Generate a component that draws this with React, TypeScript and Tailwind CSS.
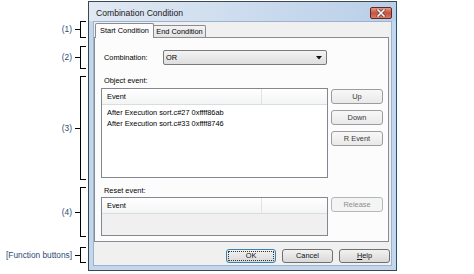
import React from "react";

function Bracket({ label, cls }: { label: string; cls: string }) {
  return (
    <div className={`flex items-center ${cls}`}>
      <span className="flex-1 text-right text-[8.3px] leading-none text-[#2b4a75] pr-[3px] whitespace-nowrap">
        {label}
      </span>
      <div className="w-[5px] h-px bg-black" />
      <div className="w-[6px] self-stretch border-l border-t border-b border-black" />
    </div>
  );
}

function Btn({
  children,
  cls = "",
  variant = "normal",
}: {
  children: React.ReactNode;
  cls?: string;
  variant?: "normal" | "side" | "disabled" | "focus";
}) {
  const v =
    variant === "disabled"
      ? "border-[#b5b8ba] bg-[#f4f4f4] text-[#8d8d8d]"
      : variant === "side"
      ? "border-[#9c9c9c] bg-gradient-to-b from-[#f8f8f8] to-[#e9e9e9] text-[#3a3a3a]"
      : variant === "focus"
      ? "border-[#3c7fb1] bg-gradient-to-b from-[#f2f2f2] to-[#dadada] text-[#111]"
      : "border-[#707070] bg-gradient-to-b from-[#f2f2f2] to-[#d9d9d9] text-[#111]";
  return (
    <div
      className={`relative flex items-center justify-center rounded-[3px] border text-[7.4px] leading-none ${v} ${cls}`}
    >
      {variant === "focus" && (
        <div className="absolute inset-[1px] border border-dotted border-[#333] rounded-[1px]" />
      )}
      <span className="relative">{children}</span>
    </div>
  );
}

function ListBox({
  w,
  h,
  rows,
  body,
}: {
  w: string;
  h: string;
  rows: string[];
  body: string;
}) {
  return (
    <div className={`${w} ${h} border border-[#828790] ${body} flex flex-col`}>
      <div className="h-[16px] flex bg-gradient-to-b from-[#ffffff] to-[#f3f4f5] border-b border-[#dcdcdc]">
        <div className="w-[160px] border-r border-[#e3e3e3] flex items-center pl-[5px] text-[7.4px] leading-none text-black">
          Event
        </div>
        <div className="flex-1" />
      </div>
      <div className="flex flex-col pt-[2px]">
        {rows.map((r) => (
          <div
            key={r}
            className="h-[11px] flex items-center pl-[5px] text-[7.4px] leading-none text-black whitespace-nowrap"
          >
            {r}
          </div>
        ))}
      </div>
    </div>
  );
}

export default function App() {
  return (
    <div className="w-[474px] h-[274px] bg-white flex items-start font-['Liberation_Sans',Arial,sans-serif] overflow-hidden">
      {/* annotation column */}
      <div className="w-[86px] mr-[2px] flex flex-col">
        <Bracket label="(1)" cls="mt-[21px] h-[17px]" />
        <Bracket label="(2)" cls="mt-[8px] h-[23px]" />
        <Bracket label="(3)" cls="mt-[7px] h-[104px]" />
        <Bracket label="(4)" cls="mt-[7px] h-[50px]" />
        <Bracket label="[Function buttons]" cls="mt-[10px] h-[16px]" />
      </div>

      {/* dialog window */}
      <div className="mt-px w-[309px] h-[270px] border border-[#3b4652] border-r-[#1d5876] bg-[#c3d6ec] flex flex-col">
        {/* title bar */}
        <div className="h-[19px] flex items-start bg-gradient-to-r from-[#e1e9f3] via-[#cddcee] to-[#b9cfe8]">
          <span className="pl-[7px] pt-[6px] text-[8.6px] leading-[10px] text-[#1a1a1a] whitespace-nowrap">
            Combination Condition
          </span>
          <div className="ml-auto mr-[4px] mt-[5px] w-[22px] h-[12px] rounded-[2px] border border-[#5b2a22] bg-gradient-to-b from-[#e09a8a] via-[#c8503e] to-[#d77a66] flex items-center justify-center">
            <svg width="10" height="8" viewBox="0 0 10 8">
              <path d="M2 1 L8 7 M8 1 L2 7" stroke="#6a3a34" strokeWidth="3" strokeLinecap="square" />
              <path d="M2 1 L8 7 M8 1 L2 7" stroke="#ffffff" strokeWidth="1.6" strokeLinecap="square" />
            </svg>
          </div>
        </div>

        {/* client area */}
        <div className="mx-[4px] mb-[4px] flex-1 border border-[#9cb3cd] bg-[#f0f0f0] flex flex-col">
          {/* tabs */}
          <div className="h-[16px] flex items-end pl-px -mb-px relative z-10">
            <div className="w-[59px] h-[15px] border-t border-l border-r border-[#898c95] rounded-t-[2px] bg-[#fcfcfc] flex items-center justify-center text-[7.4px] leading-none text-black pb-[1px]">
              Start Condition
            </div>
            <div className="w-[52px] h-[12px] mb-px border-t border-r border-[#898c95] rounded-tr-[2px] bg-gradient-to-b from-[#f3f3f3] to-[#e4e4e4] flex items-center justify-center text-[7.4px] leading-none text-black">
              End Condition
            </div>
          </div>

          {/* tab panel */}
          <div className="mr-[2px] h-[205px] border border-[#898c95] bg-[#fcfcfc] flex flex-col pl-[6px]">
            {/* combination row */}
            <div className="mt-[12px] h-[15px] flex items-center pl-[3px]">
              <span className="w-[59px] text-[7.4px] leading-none text-black">Combination:</span>
              <div className="w-[164px] h-[15px] rounded-[2px] border border-[#7a7a7a] bg-gradient-to-b from-[#f3f3f3] to-[#dedede] flex items-center pl-[2px] pr-[4px]">
                <span className="text-[7.4px] leading-none text-black">OR</span>
                <svg className="ml-auto" width="6" height="4" viewBox="0 0 6 4">
                  <path d="M0 0 L6 0 L3 3.5 Z" fill="#111" />
                </svg>
              </div>
            </div>

            {/* object event */}
            <div className="mt-[11px] h-[10px] pl-[3px] text-[7.4px] leading-[10px] text-black">Object event:</div>
            <div className="mt-[2px] flex">
              <ListBox
                w="w-[227px]"
                h="h-[90px]"
                body="bg-white"
                rows={["After Execution sort.c#27 0xffff86ab", "After Execution sort.c#33 0xffff8746"]}
              />
              <div className="ml-[3px] mt-px flex flex-col gap-[6px]">
                <Btn cls="w-[52px] h-[15px]" variant="side">Up</Btn>
                <Btn cls="w-[52px] h-[15px]" variant="side">Down</Btn>
                <Btn cls="w-[52px] h-[15px]" variant="side">R Event</Btn>
              </div>
            </div>

            {/* reset event */}
            <div className="mt-[8px] h-[10px] pl-[3px] text-[7.4px] leading-[10px] text-black">Reset event:</div>
            <div className="mt-px flex">
              <ListBox w="w-[227px]" h="h-[39px]" body="bg-[#f0f0f0]" rows={[]} />
              <div className="ml-[3px]">
                <Btn cls="w-[52px] h-[15px]" variant="disabled">Release</Btn>
              </div>
            </div>
          </div>

          {/* function buttons */}
          <div className="flex justify-end gap-[6px] pt-[7px] pr-px">
            <Btn cls="w-[50px] h-[14px]" variant="focus">OK</Btn>
            <Btn cls="w-[51px] h-[14px]">Cancel</Btn>
            <Btn cls="w-[51px] h-[14px]">
              <span className="underline">H</span>elp
            </Btn>
          </div>
        </div>
      </div>
    </div>
  );
}
